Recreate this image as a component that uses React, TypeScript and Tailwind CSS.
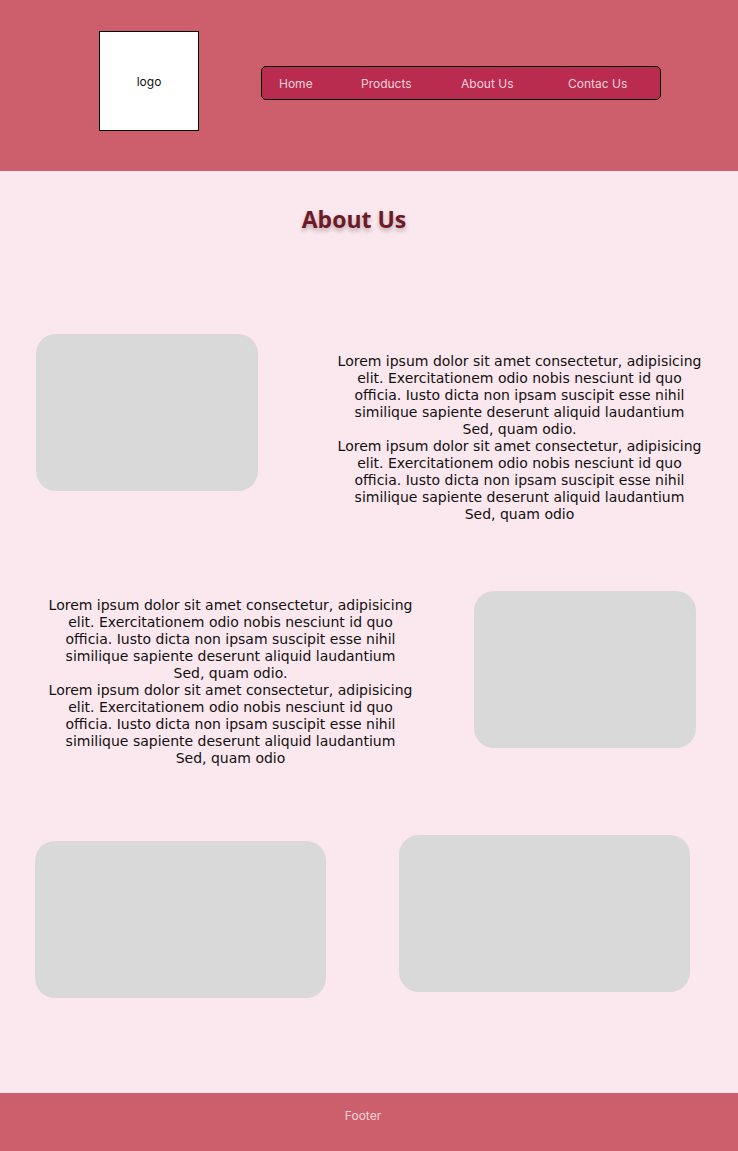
import React from 'react';

const navLinks = ['Home', 'Products', 'About Us', 'Contac Us'];

const paragraph = [
  'Lorem ipsum dolor sit amet consectetur, adipisicing',
  'elit. Exercitationem odio nobis nesciunt id quo',
  'officia. Iusto dicta non ipsam suscipit esse nihil',
  'similique sapiente deserunt aliquid laudantium',
];

function LoremBlock() {
  return (
    <div className="text-center text-[14px] leading-[17px] text-[#111] whitespace-nowrap font-['DejaVu_Sans',sans-serif]">
      {paragraph.map(line => (
        <div key={line}>{line}</div>
      ))}
      <div>Sed, quam odio.</div>
      {paragraph.map(line => (
        <div key={line + '2'}>{line}</div>
      ))}
      <div>Sed, quam odio</div>
    </div>
  );
}

function Placeholder({ className }: { className: string }) {
  return <div className={`bg-[#d9d9d9] rounded-[20px] h-[157px] shrink-0 ${className}`} />;
}

export default function App() {
  return (
    <div className="w-[738px] min-h-[1151px] flex flex-col bg-[#fbe7ee] font-['Inter',sans-serif]">
      {/* Header */}
      <header className="h-[171px] bg-[#cd5f6c] flex items-start">
        <div className="ml-[99px] mt-[31px] w-[100px] h-[100px] bg-white border border-black flex items-center justify-center pt-[2px] text-[12px] text-[#111]">
          logo
        </div>
        <nav className="ml-[62px] mt-[66px] w-[400px] h-[34px] bg-[#b92b4f] border border-black rounded-[5px] flex items-center pl-[17px] pt-[2px] text-[12px] text-[#f7d2da]">
          <span className="w-[82px]">{navLinks[0]}</span>
          <span className="w-[100px]">{navLinks[1]}</span>
          <span className="w-[107px]">{navLinks[2]}</span>
          <span>{navLinks[3]}</span>
        </nav>
      </header>

      {/* Main */}
      <main className="flex-1 flex flex-col">
        <h1 className="mt-[34px] pr-[30px] text-center text-[23px] leading-[28px] font-bold text-[#6d1a24] font-['Open_Sans',sans-serif] [text-shadow:0_3px_4px_rgba(0,0,0,0.25)]">
          About Us
        </h1>

        <section className="mt-[101px] flex items-start">
          <Placeholder className="ml-[36px] w-[222px]" />
          <div className="ml-[79px] mt-[19px] w-[365px] flex justify-center">
            <LoremBlock />
          </div>
        </section>

        <section className="mt-[68px] flex items-start">
          <div className="ml-[48px] mt-[6px] w-[365px] flex justify-center">
            <LoremBlock />
          </div>
          <Placeholder className="ml-[61px] w-[222px]" />
        </section>

        <section className="mt-[68px] flex items-start">
          <Placeholder className="ml-[35px] mt-[6px] w-[291px]" />
          <Placeholder className="ml-[73px] w-[291px]" />
        </section>
      </main>

      {/* Footer */}
      <footer className="h-[58px] bg-[#cd5f6c] flex items-start justify-center pt-[14px] pr-[12px] text-[12px] text-[#f7d2da]">
        Footer
      </footer>
    </div>
  );
}
